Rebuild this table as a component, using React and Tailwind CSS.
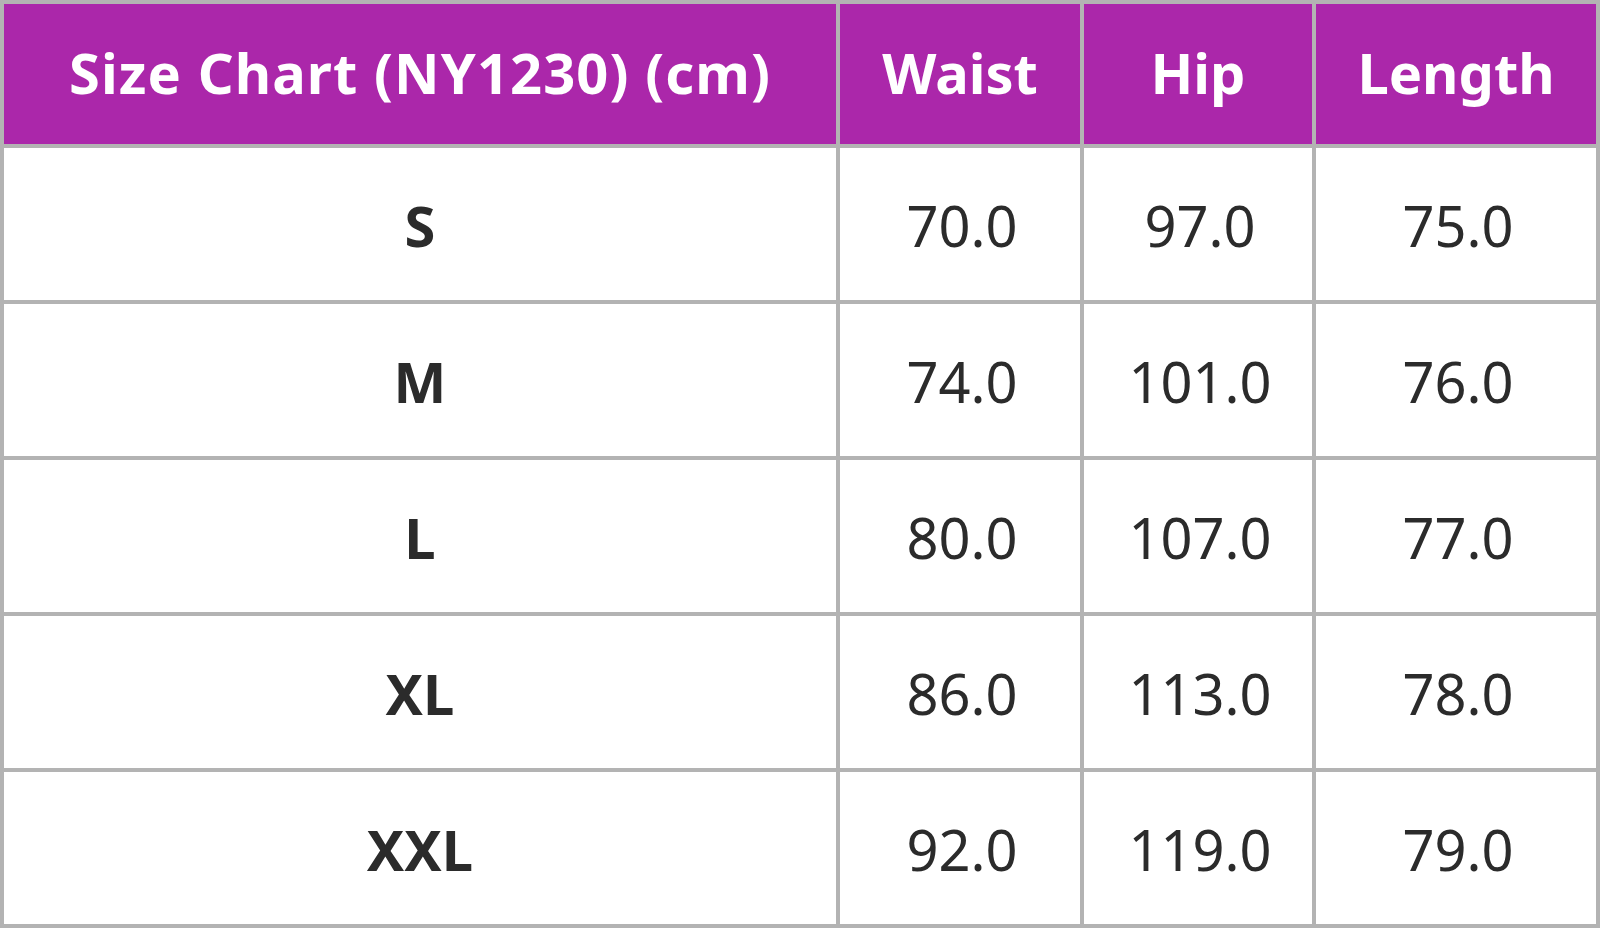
const HEAD = ['Size Chart (NY1230) (cm)', 'Waist', 'Hip', 'Length']

const ROWS = [
  ['S', '70.0', '97.0', '75.0'],
  ['M', '74.0', '101.0', '76.0'],
  ['L', '80.0', '107.0', '77.0'],
  ['XL', '86.0', '113.0', '78.0'],
  ['XXL', '92.0', '119.0', '79.0'],
]

export default function App() {
  return (
    <div className="w-[1600px] h-[928px] bg-[#b3b3b3] p-[4px] font-['Noto_Sans','Open_Sans',sans-serif]">
      <div className="grid grid-cols-[832px_240px_228px_280px] grid-rows-[140px_repeat(5,152px)] gap-[4px]">
        {HEAD.map((h, i) => (
          <div
            key={h}
            className={
              'bg-[#ab27aa] text-white font-bold text-[56px] flex items-center justify-center leading-none pb-[4px] ' +
              (i === 0 ? 'tracking-[1.1px]' : '')
            }
          >
            {h}
          </div>
        ))}
        {ROWS.map((row) =>
          row.map((cell, i) => (
            <div
              key={row[0] + i}
              className={
                'bg-white text-[#2b2b2b] text-[56px] flex items-center justify-center leading-none pt-[2px] ' +
                (i === 0 ? 'font-bold' : 'font-normal pl-[4px]')
              }
            >
              {cell}
            </div>
          ))
        )}
      </div>
    </div>
  )
}
